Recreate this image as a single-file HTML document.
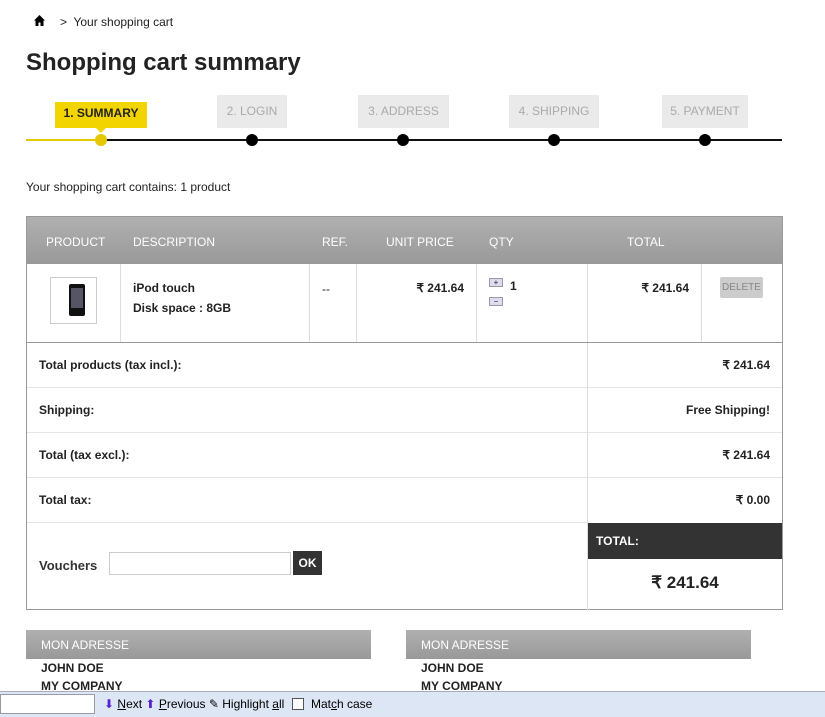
<!DOCTYPE html>
<html><head><meta charset="utf-8"><style>
*{margin:0;padding:0;box-sizing:border-box}
body{width:825px;height:717px;overflow:hidden;background:#fff;font-family:"Liberation Sans",Arial,sans-serif;color:#222;position:relative}
.a{position:absolute}
.hdr{background:linear-gradient(#b0b0b0,#999);color:#fff;font-size:12px}
.b{font-weight:bold;font-size:12px}
.step{position:absolute;top:95px;height:33px;background:#eaeaea;color:#aaa;font-size:12px;line-height:33px;text-align:center}
.dot{position:absolute;top:134px;width:12px;height:12px;border-radius:50%;background:#000}
.vl{position:absolute;width:1px;background:#ddd}
.hl{position:absolute;height:1px;background:#e4e4e4}
</style></head><body>
<svg class="a" style="left:34px;top:15px" width="11" height="11" viewBox="0 0 11 11"><path d="M5.5 0L0 5.5h1.5V11h3V7.5h2V11h3V5.5H11z" fill="#000"/></svg>
<div class="a" style="left:60px;top:15px;font-size:12px">&gt;&nbsp; Your shopping cart</div>
<div class="a" style="left:26px;top:49px;font-size:24px;font-weight:bold;color:#222">Shopping cart summary</div>

<div class="a" style="left:26px;top:139px;width:756px;height:2px;background:#111"></div>
<div class="a" style="left:26px;top:139px;width:75px;height:2px;background:#e6c800"></div>
<div class="step" style="left:55px;top:102px;width:92px;height:26px;line-height:22px;background:#f2d500;color:#222;font-weight:bold">1. SUMMARY</div>
<div class="a" style="left:96px;top:128px;width:0;height:0;border-left:5px solid transparent;border-right:5px solid transparent;border-top:5px solid #f2d500"></div>
<div class="step" style="left:217px;width:70px">2. LOGIN</div>
<div class="step" style="left:358px;width:91px">3. ADDRESS</div>
<div class="step" style="left:509px;width:90px">4. SHIPPING</div>
<div class="step" style="left:662px;width:86px">5. PAYMENT</div>
<div class="dot" style="left:95px;background:#e6c800"></div>
<div class="dot" style="left:246px"></div>
<div class="dot" style="left:397px"></div>
<div class="dot" style="left:548px"></div>
<div class="dot" style="left:699px"></div>

<div class="a" style="left:26px;top:180px;font-size:12px">Your shopping cart contains: 1 product</div>

<div class="a" style="left:26px;top:216px;width:757px;height:394px;border:1px solid #999"></div>
<div class="a hdr" style="left:27px;top:217px;width:755px;height:47px"></div>
<div class="a" style="left:46px;top:235px;font-size:12px;color:#fff">PRODUCT</div>
<div class="a" style="left:133px;top:235px;font-size:12px;color:#fff">DESCRIPTION</div>
<div class="a" style="left:322px;top:235px;font-size:12px;color:#fff">REF.</div>
<div class="a" style="left:386px;top:235px;font-size:12px;color:#fff">UNIT PRICE</div>
<div class="a" style="left:489px;top:235px;font-size:12px;color:#fff">QTY</div>
<div class="a" style="left:627px;top:235px;font-size:12px;color:#fff">TOTAL</div>

<div class="vl" style="left:120px;top:264px;height:78px"></div>
<div class="vl" style="left:309px;top:264px;height:78px"></div>
<div class="vl" style="left:356px;top:264px;height:78px"></div>
<div class="vl" style="left:476px;top:264px;height:78px"></div>
<div class="vl" style="left:587px;top:264px;height:346px"></div>
<div class="vl" style="left:701px;top:264px;height:78px"></div>
<div class="a" style="left:27px;top:342px;width:755px;height:1px;background:#999"></div>
<div class="hl" style="left:27px;top:387px;width:755px"></div>
<div class="hl" style="left:27px;top:432px;width:755px"></div>
<div class="hl" style="left:27px;top:477px;width:755px"></div>
<div class="hl" style="left:27px;top:522px;width:560px"></div>

<div class="a" style="left:50px;top:277px;width:47px;height:47px;border:1px solid #ccc"></div>
<div class="a" style="left:69px;top:284px;width:16px;height:32px;background:#111;border-radius:2px"></div>
<div class="a" style="left:71px;top:288px;width:12px;height:20px;background:#556"></div>
<div class="a b" style="left:133px;top:281px">iPod touch</div>
<div class="a b" style="left:133px;top:301px">Disk space : 8GB</div>
<div class="a" style="left:322px;top:282px;font-size:12px">--</div>
<div class="a b" style="left:356px;top:281px;width:108px;text-align:right">₹ 241.64</div>
<div class="a" style="left:489px;top:278px;width:14px;height:9px;border:1px solid #99a;background:#dde;font-size:8px;line-height:7px;text-align:center">+</div>
<div class="a" style="left:489px;top:297px;width:14px;height:9px;border:1px solid #99a;background:#dde;font-size:8px;line-height:7px;text-align:center">−</div>
<div class="a b" style="left:510px;top:279px">1</div>
<div class="a b" style="left:587px;top:281px;width:102px;text-align:right">₹ 241.64</div>
<div class="a" style="left:720px;top:277px;width:43px;height:21px;background:#ccc;border-radius:2px;color:#888;font-size:10px;line-height:21px;text-align:center">DELETE</div>

<div class="a b" style="left:39px;top:358px">Total products (tax incl.):</div>
<div class="a b" style="left:587px;top:358px;width:183px;text-align:right">₹ 241.64</div>
<div class="a b" style="left:39px;top:403px">Shipping:</div>
<div class="a b" style="left:587px;top:403px;width:183px;text-align:right">Free Shipping!</div>
<div class="a b" style="left:39px;top:448px">Total (tax excl.):</div>
<div class="a b" style="left:587px;top:448px;width:183px;text-align:right">₹ 241.64</div>
<div class="a b" style="left:39px;top:493px">Total tax:</div>
<div class="a b" style="left:587px;top:493px;width:183px;text-align:right">₹ 0.00</div>

<div class="a" style="left:39px;top:558px;font-size:13px;font-weight:bold;color:#333">Vouchers</div>
<div class="a" style="left:109px;top:552px;width:182px;height:23px;border:1px solid #ccc"></div>
<div class="a" style="left:293px;top:551px;width:29px;height:24px;background:#333;color:#fff;font-size:12px;font-weight:bold;line-height:24px;text-align:center">OK</div>
<div class="a" style="left:588px;top:523px;width:194px;height:36px;background:#333;color:#fff;font-size:12px;font-weight:bold;padding:11px 0 0 8px">TOTAL:</div>
<div class="a" style="left:588px;top:573px;width:194px;text-align:center;font-size:17px;font-weight:bold">₹ 241.64</div>

<div class="a hdr" style="left:26px;top:630px;width:345px;height:29px;padding:8px 15px">MON ADRESSE</div>
<div class="a hdr" style="left:406px;top:630px;width:345px;height:29px;padding:8px 15px">MON ADRESSE</div>
<div class="a b" style="left:41px;top:661px">JOHN DOE</div>
<div class="a b" style="left:41px;top:679px">MY COMPANY</div>
<div class="a b" style="left:421px;top:661px">JOHN DOE</div>
<div class="a b" style="left:421px;top:679px">MY COMPANY</div>

<div class="a" style="left:0;top:691px;width:825px;height:26px;background:#dde6f4;border-top:1px solid #aab"></div>
<div class="a" style="left:0;top:694px;width:95px;height:20px;background:#fff;border:1px solid #99a"></div>
<div class="a" style="left:104px;top:697px;font-size:12px;color:#000;white-space:nowrap"><span style="color:#5522cc">⬇</span> <u>N</u>ext <span style="color:#5522cc">⬆</span> <u>P</u>revious ✎ Highlight <u>a</u>ll <span style="display:inline-block;width:12px;height:12px;border:1px solid #555;background:#fff;vertical-align:-2px;margin:0 4px"></span> Mat<u>c</u>h case</div>
</body></html>
